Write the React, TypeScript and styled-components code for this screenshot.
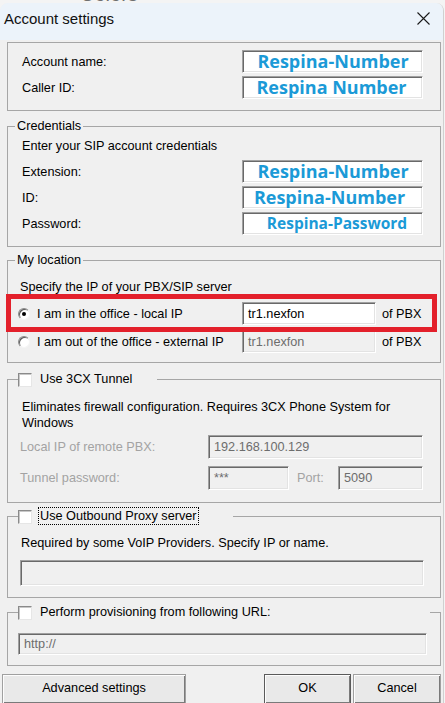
import React from "react";
import styled, { createGlobalStyle } from "styled-components";

const GlobalStyle = createGlobalStyle`
  html, body { margin: 0; padding: 0; background: #f4f4f4; }
  body { font-family: "Liberation Sans", Arial, sans-serif; }
  *, *::before, *::after { box-sizing: border-box; }
`;

const Screen = styled.div`
  width: 445px;
  height: 703px;
  overflow: hidden;
  background: #f4f4f4;
`;

const BehindStrip = styled.div`
  height: 3px;
  overflow: hidden;
  padding-left: 80px;
`;

const BehindText = styled.div`
  font-size: 20px;
  line-height: 20px;
  margin-top: -16px;
  color: #6f6f6f;
`;

const Window = styled.div`
  width: 444px;
  background: #f0f0f0;
  border-radius: 8px 8px 0 0;
  border-right: 1px solid #d0d0d0;
  overflow: hidden;
`;

const TitleBar = styled.div`
  height: 37px;
  background: #ecf3fa;
  display: flex;
  align-items: center;
  justify-content: space-between;
  padding: 0 13px 0 4px;
`;

const Title = styled.span`
  font-size: 15px;
  color: #111;
  margin-top: -6px;
`;

const CloseGlyph = styled.svg`
  width: 13px;
  height: 13px;
  display: block;
  margin-top: -6px;
`;

const Body = styled.div`
  display: flex;
  flex-direction: column;
  padding: 0 2px 0 2px;
`;

const Group = styled.fieldset<{ $mt: number; $pt: number; $pb: number }>`
  margin: ${(p) => p.$mt}px 0 0 5px;
  min-inline-size: 0;
  width: 434px;
  padding: ${(p) => p.$pt}px 0 ${(p) => p.$pb}px 0;
  border: 1px solid #a6a6a6;
  font-size: 12.7px;
  color: #000;
`;

const Legend = styled.legend<{ $ml: number; $w?: number }>`
  margin-left: ${(p) => p.$ml}px;
  padding: 0 2px;
  height: 16px;
  line-height: 16px;
  font-size: 12.7px;
  display: flex;
  align-items: center;
  ${(p) => (p.$w ? `width: ${p.$w}px; padding: 0;` : "")}
`;

const GroupBody = styled.div<{ $pl: number }>`
  display: flex;
  flex-direction: column;
  padding-left: ${(p) => p.$pl}px;
`;

const Note = styled.div<{ $indent?: number; $gap?: number }>`
  line-height: 16px;
  padding-left: ${(p) => p.$indent ?? 0}px;
  margin-bottom: ${(p) => p.$gap ?? 0}px;
`;

const FieldGrid = styled.div`
  display: grid;
  grid-template-columns: 220px 181px;
  grid-auto-rows: 23px;
  row-gap: 3px;
  align-items: center;
`;

const Label = styled.span<{ $dim?: boolean }>`
  color: ${(p) => (p.$dim ? "#a3a3a3" : "#000")};
  white-space: nowrap;
`;

const TextBox = styled.div<{ $disabled?: boolean; $h?: number; $w?: number; $span?: string }>`
  height: ${(p) => p.$h ?? 23}px;
  ${(p) => (p.$w ? `width: ${p.$w}px;` : "")}
  ${(p) => (p.$span ? `grid-column: ${p.$span};` : "")}
  background: ${(p) => (p.$disabled ? "#f0f0f0" : "#ffffff")};
  border: 1px solid;
  border-color: #a0a0a0 #ffffff #ffffff #a0a0a0;
  box-shadow: inset 1px 1px 0 #696969, inset -1px -1px 0 #e3e3e3;
  padding: 0 4px 0 5px;
  display: flex;
  align-items: center;
  overflow: hidden;
  color: ${(p) => (p.$disabled ? "#6d6d6d" : "#000")};
  white-space: nowrap;
`;

const BrandValue = styled.span<{ $size: number; $shift?: number }>`
  flex: 1;
  text-align: center;
  font-family: "Open Sans", "Liberation Sans", sans-serif;
  font-weight: 700;
  font-size: ${(p) => p.$size}px;
  line-height: 21px;
  color: #1b9ad7;
  margin-left: ${(p) => p.$shift ?? 0}px;
`;

const LocationArea = styled.div`
  position: relative;
  display: grid;
  grid-template-columns: 224px 134px auto;
  grid-auto-rows: 23px;
  row-gap: 5px;
  align-items: center;
`;

const Highlight = styled.div`
  position: absolute;
  top: -8px;
  left: -12px;
  width: 431px;
  height: 38px;
  border: 5px solid #e3202b;
  pointer-events: none;
`;

const RadioLabel = styled.label`
  display: flex;
  align-items: center;
  gap: 7px;
  white-space: nowrap;
`;

const Radio = styled.span<{ $checked?: boolean }>`
  width: 12px;
  height: 12px;
  border-radius: 50%;
  border: 1px solid;
  border-color: #8a8a8a #f4f4f4 #f4f4f4 #8a8a8a;
  background: #fff;
  box-shadow: inset 1px 1px 0 #5a5a5a;
  display: flex;
  align-items: center;
  justify-content: center;
  flex: none;
  &::after {
    content: "";
    width: 4px;
    height: 4px;
    border-radius: 50%;
    background: ${(p) => (p.$checked ? "#000" : "transparent")};
  }
`;

const Suffix = styled.span`
  padding-left: 6px;
  white-space: nowrap;
`;

const CheckRow = styled.span`
  display: flex;
  align-items: center;
  gap: 6px;
  height: 16px;
`;

const CheckBox = styled.span`
  width: 14px;
  height: 14px;
  flex: none;
  background: #fff;
  border: 1px solid;
  border-color: #8a8a8a #e6e6e6 #e6e6e6 #8a8a8a;
  box-shadow: inset 1px 1px 0 #c8c8c8;
  margin-top: 2px;
`;

const CheckText = styled.span<{ $focus?: boolean }>`
  border: 1px dotted ${(p) => (p.$focus ? "#000" : "transparent")};
  padding: 0 1px;
  line-height: 16px;
  white-space: nowrap;
`;

const TunnelGrid = styled.div`
  display: grid;
  grid-template-columns: 188px 81px 49px 85px;
  grid-auto-rows: 24px;
  row-gap: 7px;
  align-items: center;
`;

const PortLabel = styled(Label)`
  padding-left: 8px;
`;

const ButtonRow = styled.div`
  display: flex;
  margin-top: 8px;
  height: 30px;
`;

const ButtonCluster = styled.div`
  display: flex;
  gap: 2px;
  margin-left: auto;
`;

const Button = styled.button<{ $w: number; $default?: boolean }>`
  width: ${(p) => p.$w}px;
  height: 30px;
  background: #e9e9e9;
  border: 1px solid ${(p) => (p.$default ? "#5a5a5a" : "#a0a0a0")};
  box-shadow: inset 1px 1px 0 #fdfdfd, inset -1px -1px 0 #7a7a7a;
  font-family: "Liberation Sans", Arial, sans-serif;
  font-size: 12.7px;
  color: #000;
  padding: 5px 0 0;
  line-height: 16px;
  display: flex;
  justify-content: center;
  align-items: flex-start;
`;

export default function App() {
  return (
    <Screen>
      <GlobalStyle />
      <BehindStrip>
        <BehindText>Colors</BehindText>
      </BehindStrip>
      <Window>
        <TitleBar>
          <Title>Account settings</Title>
          <CloseGlyph viewBox="0 0 13 13">
            <path d="M0.5 0.5 L12.5 12.5 M12.5 0.5 L0.5 12.5" stroke="#1a1a1a" strokeWidth="1.1" fill="none" />
          </CloseGlyph>
        </TitleBar>
        <Body>
          <Group $mt={2} $pt={7} $pb={11}>
            <GroupBody $pl={14}>
              <FieldGrid>
                <Label>Account name:</Label>
                <TextBox>
                  <BrandValue $size={18}>Respina-Number</BrandValue>
                </TextBox>
                <Label>Caller ID:</Label>
                <TextBox>
                  <BrandValue $size={18} $shift={-3}>Respina Number</BrandValue>
                </TextBox>
              </FieldGrid>
            </GroupBody>
          </Group>

          <Group $mt={7} $pt={4} $pb={11}>
            <Legend $ml={7}>Credentials</Legend>
            <GroupBody $pl={14}>
              <Note $gap={6}>Enter your SIP account credentials</Note>
              <FieldGrid>
                <Label>Extension:</Label>
                <TextBox>
                  <BrandValue $size={18}>Respina-Number</BrandValue>
                </TextBox>
                <Label>ID:</Label>
                <TextBox>
                  <BrandValue $size={18} $shift={-7}>Respina-Number</BrandValue>
                </TextBox>
                <Label>Password:</Label>
                <TextBox>
                  <BrandValue $size={15.5} $shift={8}>Respina-Password</BrandValue>
                </TextBox>
              </FieldGrid>
            </GroupBody>
          </Group>

          <Group $mt={5} $pt={11} $pb={9}>
            <Legend $ml={7}>My location</Legend>
            <GroupBody $pl={10}>
              <Note $indent={2} $gap={7}>Specify the IP of your PBX/SIP server</Note>
              <LocationArea>
                <RadioLabel>
                  <Radio $checked />I am in the office - local IP
                </RadioLabel>
                <TextBox>tr1.nexfon</TextBox>
                <Suffix>of PBX</Suffix>
                <RadioLabel>
                  <Radio />I am out of the office - external IP
                </RadioLabel>
                <TextBox $disabled>tr1.nexfon</TextBox>
                <Suffix>of PBX</Suffix>
                <Highlight />
              </LocationArea>
            </GroupBody>
          </Group>

          <Group $mt={8} $pt={12} $pb={12}>
            <Legend $ml={10} $w={139}>
              <CheckRow>
                <CheckBox />
                <CheckText>Use 3CX Tunnel</CheckText>
              </CheckRow>
            </Legend>
            <GroupBody $pl={12}>
              <Note $indent={2}>Eliminates firewall configuration. Requires 3CX Phone System for</Note>
              <Note $indent={2} $gap={4}>Windows</Note>
              <TunnelGrid>
                <Label $dim>Local IP of remote PBX:</Label>
                <TextBox $disabled $h={24} $span="2 / 5">192.168.100.129</TextBox>
                <Label $dim>Tunnel password:</Label>
                <TextBox $disabled $h={24}>***</TextBox>
                <PortLabel $dim>Port:</PortLabel>
                <TextBox $disabled $h={24}>5090</TextBox>
              </TunnelGrid>
            </GroupBody>
          </Group>

          <Group $mt={5} $pt={11} $pb={11}>
            <Legend $ml={10} $w={215}>
              <CheckRow>
                <CheckBox />
                <CheckText $focus>Use Outbound Proxy server</CheckText>
              </CheckRow>
            </Legend>
            <GroupBody $pl={12}>
              <Note $indent={1} $gap={9}>Required by some VoIP Providers. Specify IP or name.</Note>
              <TextBox $disabled $h={26} $w={404} />
            </GroupBody>
          </Group>

          <Group $mt={6} $pt={13} $pb={10}>
            <Legend $ml={10} $w={412}>
              <CheckRow>
                <CheckBox />
                <CheckText>Perform provisioning from following URL:</CheckText>
              </CheckRow>
            </Legend>
            <GroupBody $pl={10}>
              <TextBox $disabled $h={22} $w={409}>http://</TextBox>
            </GroupBody>
          </Group>

          <ButtonRow>
            <Button $w={184}>Advanced settings</Button>
            <ButtonCluster>
              <Button $w={87} $default>OK</Button>
              <Button $w={88}>Cancel</Button>
            </ButtonCluster>
          </ButtonRow>
        </Body>
      </Window>
    </Screen>
  );
}
